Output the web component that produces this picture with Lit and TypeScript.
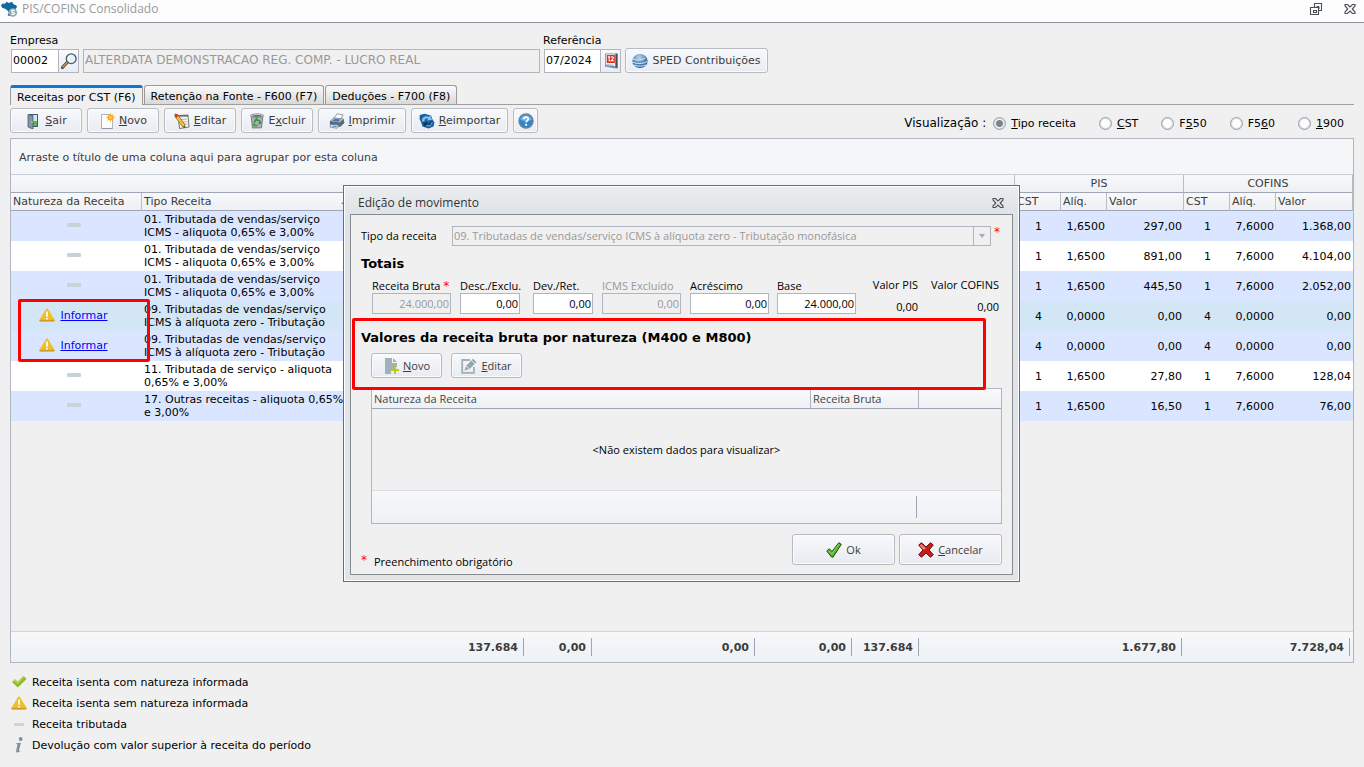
import { LitElement, html, css, svg, nothing } from "lit";
import { customElement, property, state } from "lit/decorators.js";
import { classMap } from "lit/directives/class-map.js";

const icons: Record<string, unknown> = {
  brazil: svg`<path d="M0 4.500 1.500 2.500 4 2.800 5.500.8 8 2l3-1.200 1.500 2.400 3 1.300.5 1.500-1.500 2-1 3-2.500 1.500-1.500 2.500L8 15l-1.500-1L8 12 7 10 5 8.200 3.500 7.500 1.500 7z" fill="#14699c"/><circle cx="11.800" cy="11.500" r="4.300" fill="#8fa9b8"/><path d="M13.600 9.700c-1-.8-3-.6-3 .6s3 .8 3 2-2.200 1.400-3.200.5" fill="none" stroke="#fff" stroke-width="1.300"/>`,
  search: svg`<path d="M1.500 14.500 6.500 9" stroke="#5f4326" stroke-width="3.200" stroke-linecap="round"/><path d="M2 14 6 9.600" stroke="#c49a5a" stroke-width="1.500" stroke-linecap="round"/><circle cx="10.200" cy="5.700" r="4.900" fill="#e6f1fa" stroke="#4a5866" stroke-width="1.300"/><path d="M7.500 5.500a3 3 0 0 1 3-2.600" stroke="#fff" stroke-width="1.400" fill="none"/>`,
  calendar: svg`<path d="M2 .5h12.500v15l-3-.2L2 13.500z" fill="#7c8998"/><path d="M2.800 1.200h9.700v12L2.800 12z" fill="#eef2f6"/><path d="M3.800 2h8v8h-8z" fill="#d6301d"/><path d="M5 4.200 6.200 3.500v5M8 4.600c.3-1.200 2.400-1.100 2.400.2 0 1-1.200 1.800-2.300 3h2.700" stroke="#fff" stroke-width="1.100" fill="none"/><path d="M12.500 1 14.500.500v15l-2-2.300z" fill="#454f5c"/><path d="M3.500 11.500l7 1" stroke="#9fc4e4" stroke-width="1.400"/>`,
  globe: svg`<defs><radialGradient id="g" cx=".45" cy=".25" r=".8"><stop offset="0" stop-color="#b9d4ec"/><stop offset=".6" stop-color="#4a7fb4"/><stop offset="1" stop-color="#234f82"/></radialGradient></defs><ellipse cx="8" cy="8" rx="7.700" ry="7" fill="url(#g)"/><path d="M.5 5.500c4 2.200 8 2.200 12.500-.5M.6 9c4 2 10 2.200 14.700-.4M2 12c4 1.600 9 1.500 12-.2" stroke="#dcebf7" stroke-width="1" fill="none"/>`,
  door: svg`<path d="M4 1h9v13H4z" fill="#4d5a66"/><path d="M7 2h5v11H7z" fill="#cfe8f6"/><path d="M7 8h5v5H7z" fill="#57b947"/><path d="M3 1.500 8 2.500V16l-5-2z" fill="#8197a8" stroke="#3f4d59" stroke-width=".7"/><circle cx="7" cy="9" r=".7" fill="#e8eef2"/>`,
  page: svg`<path d="M2.500 1.500h8l3 3v11h-11z" fill="#fdfdfd" stroke="#a4acb6" stroke-width=".9"/><path d="M3 15.500h10.500" stroke="#8e98a3"/><g stroke="#ffb528" stroke-width="1.300"><path d="M11.500.3v8.400M7.300 4.500h8.400M8.600 1.600l5.800 5.800M14.400 1.600 8.600 7.400"/></g><circle cx="11.500" cy="4.500" r="2.500" fill="#ff9c12"/><circle cx="11.500" cy="4.500" r="1.200" fill="#ffe45c"/>`,
  notepad: svg`<path d="M4 2.500 14 2l1 12-9.500 1.500z" fill="#f8f6ee" stroke="#5e6670" stroke-width=".9"/><path d="M5 2.300v2M7 2.200v2M9 2.100v2M11 2v2M13 2v2" stroke="#3d454e"/><path d="M7 6.500l6-.4M7.500 9l5.700-.4M8 11.500l5.500-.5" stroke="#9aa6b2" stroke-width=".8"/><path d="M1 1l2.700.6L11 12l-.3 2.600-2.400-1.200L1 3.500z" fill="#f6c633" stroke="#7a4d12" stroke-width=".7"/><path d="M1 1l2.700.6.8 1.200L2 5 1 3.500z" fill="#d83a26"/><path d="m10.700 14.600-1.700-.9 1.700-1z" fill="#2b2b2b"/>`,
  bin: svg`<path d="M2 2.500h12l-1.500 12.300-9 .2z" fill="#a8b2ba" stroke="#606a72" stroke-width=".8"/><ellipse cx="8" cy="2.700" rx="6.500" ry="1.800" fill="#e9eef2" stroke="#6b757e" stroke-width=".8"/><ellipse cx="8" cy="2.900" rx="4.800" ry=".9" fill="#5b656e"/><path d="M5 9.500 7.500 6l1.500 2M10 7l1.500 3-2 .8M8.500 12.500H5.300L4.800 10.500" fill="none" stroke="#2f9a2b" stroke-width="1.700"/>`,
  printer: svg`<path d="M5 5 8 .8l6 1L11.500 7z" fill="#fafcfe" stroke="#6f7b86" stroke-width=".7"/><path d="M1 8 5 4.500l9.500 1.300L15.500 10l-4.500 4L.8 11.500z" fill="#5c6b78"/><path d="M1.500 8 5.200 5l8.800 1.200L10.500 9.600z" fill="#b7c4cf"/><path d="M3.300 7.700 6 5.700l5.500.8-2 2.300z" fill="#2e7dc1"/><path d="M2 11.500 9.500 12l-1.500 3.200-7-1.200z" fill="#eef5fb" stroke="#54718c" stroke-width=".7"/><path d="M3.500 13l4 .5" stroke="#3d87c7" stroke-width="1.200"/>`,
  reimport: svg`<path d="M.8 2 5.500.7 12 2.500l1.500 4 2 3-1 4-5 2-6-2L2 9 .5 6z" fill="#1a5f9e"/><path d="M3 8.500C2.500 4.500 6 2 10 3.800L11 2l2 5-5 .4 1-1.600C7 5 5.200 6 5.500 8.500z" fill="#7cc4f2"/><path d="M13.500 8.500c.2 3.500-3.500 5.500-7 3.600L5.500 14 4 9.500l5-.3-1 1.500c2 .8 3.600 0 3.500-2.200z" fill="#0c3764"/><path d="M13 9.500c-.2 2.500-2.700 4-5.300 3" fill="none" stroke="#9ad5f8" stroke-width=".9"/>`,
  help: svg`<circle cx="8" cy="8" r="7.700" fill="#72838f"/><circle cx="8" cy="8" r="6.300" fill="#2f86cf"/><path d="M2.200 7a6 6 0 0 1 11.600 0C10 8.500 6 8.500 2.200 7z" fill="#6db1e6"/><path d="M5.800 6.200C5.800 3.400 10.300 3.500 10.300 6c0 1.700-2.200 1.700-2.200 3.600" fill="none" stroke="#fff" stroke-width="1.700"/><circle cx="8.100" cy="11.800" r="1.100" fill="#fff"/>`,
  warn: svg`<path d="M8 1.600c.6 0 1 .3 1.300.8l6.200 10.300c.6 1-.1 1.800-1.100 1.800H1.600c-1 0-1.700-.8-1.100-1.800L6.700 2.400C7 1.900 7.400 1.600 8 1.600z" fill="#efc02c"/><path d="M.5 12.800h15c.3 1-.3 1.700-1.100 1.700H1.600c-.8 0-1.400-.7-1.100-1.700z" fill="#cf9e28"/><path d="M8 4.500v5.300M8 11v1.600" stroke="#fff" stroke-width="1.700"/>`,
  minus: svg`<rect x="1" y="6" width="14" height="4" rx="1.200" fill="#c8d3d8"/>`,
  dash: svg`<rect x="3" y="7" width="10" height="3" rx=".8" fill="#c8d6da"/>`,
  green: svg`<path d="m1 8 3-2.800 2.800 2.600L12.500 2 15.500 5 6.800 13.500z" fill="#8dbb2b"/><path d="m1 8 3-2.800 2.800 2.600L12.500 2l1 1-6.700 7L3 7.500z" fill="#b2d345"/>`,
  info: svg`<path d="M4.500 6.500c1.800-.3 3.600-.7 5.300-.7L8 13.200c-.2 1.200.6 1 2.100.1-1.300 2.100-5.500 3.600-4.900.3L6.500 7.600z" fill="#7e9095"/><circle cx="9.700" cy="2" r="1.900" fill="#7e9095"/>`,
  fileadd: svg`<path d="M2 0h7v5h5v4h-3v3H8v4H2z" fill="#a0b1b8"/><path d="M10 0l4 4h-4z" fill="#a0b1b8"/><path d="M12 8v8M8 12h8" stroke="#bccb14" stroke-width="2"/>`,
  editbox: svg`<path d="M9 2H1.200v12.800H13V9" fill="none" stroke="#9fb0b7" stroke-width="1.800"/><path d="M3.500 12.500 5 8l7-7.200 3.500 3.400L8.500 11z" fill="#93a6ae"/><path d="M10.500 2.500 14 6M5 8l3.500 3" stroke="#eef2f5" stroke-width=".9"/>`,
  ok: svg`<path d="m.8 9 2.500-2.200L6 9.500 12.800.8l2.500 1.500L7 15.200 5.500 15z" fill="#57b82f" stroke="#1e4a12" stroke-width="1"/><path d="M2.500 8.800 5.800 12 13 2.200" fill="none" stroke="#8fdc5c" stroke-width="1"/>`,
  cancel: svg`<path d="M3.500.8 8 5l4.500-4.200L15.300 3 11 8l4.300 4.700-2.800 2.500L8 11l-4.500 4.200L.7 12.700 5 8 .7 3z" fill="#d01a1a" stroke="#641010" stroke-width="1" stroke-linejoin="round"/><path d="M3.300 2 8 6.300 5.500 8 1.800 3.500z" fill="#ee9d97" opacity=".8"/>`,
  close: svg`<path d="M3 3.500h2.500L8 6l2.500-2.500H13V5L10.200 8 13 11v1.500h-2.500L8 10l-2.500 2.500H3V11l2.800-3L3 5z" fill="none" stroke="#4a4f55" stroke-width="1.100"/>`,
  restore: svg`<path d="M6.500 6.500v-4h7v7h-3M2.500 6.500h8v7h-8zM5.500 9.500h3v2h-3z" fill="none" stroke="#4a4f55" stroke-width="1.100"/><path d="M8.500 5.500h2.500V8" fill="none" stroke="#4a4f55" stroke-width="1"/>`,
};

@customElement("app-icon")
export class AppIcon extends LitElement {
  static styles = css`
    :host { display: inline-flex; flex: none; width: 16px; height: 16px; }
    svg { width: 100%; height: 100%; }
  `;
  @property() name = "";
  render() {
    return html`<svg viewBox="0 0 16 16" aria-hidden="true">${icons[this.name]}</svg>`;
  }
}

interface Row { pending?: boolean; tipo: [string, string]; pis: string[]; cofins: string[]; selected?: boolean }

const rows: Row[] = [
  { tipo: ["01. Tributada de vendas/serviço", "ICMS - aliquota 0,65% e 3,00%"], pis: ["1", "1,6500", "297,00"], cofins: ["1", "7,6000", "1.368,00"] },
  { tipo: ["01. Tributada de vendas/serviço", "ICMS - aliquota 0,65% e 3,00%"], pis: ["1", "1,6500", "891,00"], cofins: ["1", "7,6000", "4.104,00"] },
  { tipo: ["01. Tributada de vendas/serviço", "ICMS - aliquota 0,65% e 3,00%"], pis: ["1", "1,6500", "445,50"], cofins: ["1", "7,6000", "2.052,00"] },
  { pending: true, selected: true, tipo: ["09. Tributadas de vendas/serviço", "ICMS à alíquota zero - Tributação"], pis: ["4", "0,0000", "0,00"], cofins: ["4", "0,0000", "0,00"] },
  { pending: true, tipo: ["09. Tributadas de vendas/serviço", "ICMS à alíquota zero - Tributação"], pis: ["4", "0,0000", "0,00"], cofins: ["4", "0,0000", "0,00"] },
  { tipo: ["11. Tributada de serviço - aliquota", "0,65% e 3,00%"], pis: ["1", "1,6500", "27,80"], cofins: ["1", "7,6000", "128,04"] },
  { tipo: ["17. Outras receitas - aliquota 0,65%", "e 3,00%"], pis: ["1", "1,6500", "16,50"], cofins: ["1", "7,6000", "76,00"] },
];

const views: [string, string, string][] = [
  ["", "T", "ipo receita"], ["", "C", "ST"], ["F", "5", "50"], ["F5", "6", "0"], ["", "1", "900"],
];

const tools: [string, string, string, string, string][] = [
  ["door", "", "S", "air", "std"],
  ["page", "", "N", "ovo", "std"],
  ["notepad", "", "E", "ditar", "std"],
  ["bin", "E", "x", "cluir", "std"],
  ["printer", "", "I", "mprimir", "wide"],
  ["reimport", "", "R", "eimportar", "wider"],
];

const buttonStyles = css`
  .btn {
    display: inline-flex; align-items: center; justify-content: center; gap: 4px;
    box-sizing: border-box; height: 25px; padding: 0; flex: none;
    font: inherit; color: #3c3c3c; white-space: nowrap;
    border: 1px solid #b6bac2; border-radius: 3px;
    background: linear-gradient(#f7f9fc, #e8ebf0);
    box-shadow: inset 0 0 0 1px #fafbfd;
  }
`;

@customElement("movement-dialog")
export class MovementDialog extends LitElement {
  static styles = [buttonStyles, css`
    :host { display: block; font: 11px/16px "Open Sans", "Noto Sans", sans-serif; color: #000; }
    .dialog {
      position: relative; box-sizing: border-box; width: 677px; padding: 0 6px 6px;
      border: 1px solid #6a6e74; box-shadow: inset 0 0 0 1px #fff;
      background: linear-gradient(#ebedf0, #dfe3e6 30px, #e2e5e8);
    }
    .caption { display: flex; align-items: center; height: 28px; padding: 5px 7px 0 8px; box-sizing: border-box; color: #333; }
    .caption h2 { font: inherit; font-size: 12px; margin: 0; flex: 1; }
    .close { display: flex; padding: 0; border: 0; background: none; }
    .frame { border: 1px solid #878c93; background: #f0f0f0; padding: 11px 10px 4px; box-sizing: border-box; display: flex; flex-direction: column; }
    .type { display: flex; align-items: center; }
    .type label { width: 91px; }
    .combo { position: relative; flex: 1; display: flex; }
    select {
      appearance: none; width: 100%; height: 20px; box-sizing: border-box; border: 1px solid #b1b5bf;
      background: none; font: inherit; line-height: 18px; padding: 0 20px 0 1px; color: #999; opacity: 1; border-radius: 0; margin: 0;
    }
    .arrow { position: absolute; right: 0; top: 0; bottom: 0; width: 18px; box-sizing: border-box; border: 1px solid #b1b5bf; display: grid; place-items: center; pointer-events: none; }
    .arrow::after { content: ""; border: solid transparent; border-top-color: #aaa; border-width: 4px 3px 0; }
    .star { color: #f00; font: 12px/12px "DejaVu Sans", sans-serif; }
    .type .star { align-self: flex-start; width: 11px; padding-left: 3px; box-sizing: border-box; }
    h3 { font: bold 13px/18px "DejaVu Sans", sans-serif; margin: 0; }
    .totals-title { margin-top: 9px; }
    .totals { display: grid; grid-template-columns: 88px 73px 69px 88px 87px 79px 62px 1fr; padding: 5px 3px 0 11px; }
    .field { display: flex; flex-direction: column; white-space: nowrap; }
    .field label { line-height: 15px; height: 15px; }
    .field input {
      width: 79px; height: 21px; box-sizing: border-box; border: 1px solid #b1b5bf; background: #fff;
      font: inherit; text-align: right; padding: 0 1px 1px; color: #000; border-radius: 0; margin: 0;
    }
    .field.narrow input { width: 60px; }
    .field.off label { color: #999; }
    .field input:disabled { background: #f0f0f0; color: #999; }
    .result { display: flex; flex-direction: column; align-items: flex-end; gap: 8px; line-height: 14px; white-space: nowrap; }
    .nature-title { margin-top: 15px; }
    .actions { display: flex; gap: 9px; padding: 6px 0 0 10px; }
    .actions .btn { width: 71px; }
    .grid { margin: 10px 0 0 10px; border: 1px solid #b1b5bf; display: flex; flex-direction: column; height: 136px; box-sizing: border-box; flex: none; }
    table { width: 100%; table-layout: fixed; border-collapse: separate; border-spacing: 0; }
    th { height: 19px; padding: 0 2px; text-align: left; font-weight: normal; color: #444; border-right: 1px solid #b1b5bf; border-bottom: 1px solid #9fa5b5; background: linear-gradient(#f9fafb, #edf0f4); }
    th:last-child { border-right: 0; }
    td { height: 81px; padding: 0; text-align: center; }
    .c2 { width: 108px; } .c3 { width: 82px; }
    .sum { flex: 1; border-top: 1px solid #d8dde4; background: linear-gradient(#f6f8fa, #edf1f5); display: flex; padding: 5px 84px; justify-content: flex-end; }
    .sum span { border-right: 1px solid #9fa5b5; }
    .bottom { display: flex; align-items: flex-start; padding-top: 10px; gap: 4px; }
    .note { flex: 1; padding-top: 20px; display: flex; gap: 7px; line-height: 16px; }
    .bottom .btn { width: 103px; height: 31px; }
    .mark { position: absolute; left: 8px; top: 132px; width: 634px; height: 72px; box-sizing: border-box; border: 3px solid #f00; border-radius: 2px; pointer-events: none; }
  `];

  private field(id: string, label: unknown, value: string, opts: { narrow?: boolean; off?: boolean; locked?: boolean } = {}) {
    return html`<div class=${classMap({ field: true, narrow: !!opts.narrow, off: !!opts.off })}>
      <label for=${id}>${label}</label>
      <input id=${id} .value=${value} ?disabled=${!!(opts.off || opts.locked)} />
    </div>`;
  }

  render() {
    return html`
      <section class="dialog" role="dialog" aria-labelledby="dlg-title">
        <header class="caption">
          <h2 id="dlg-title">Edição de movimento</h2>
          <button class="close" aria-label="Fechar"><app-icon name="close"></app-icon></button>
        </header>
        <div class="frame">
          <div class="type">
            <label for="tipo">Tipo da receita</label>
            <div class="combo">
              <select id="tipo" disabled><option>09. Tributadas de vendas/serviço ICMS à alíquota zero - Tributação monofásica</option></select>
              <span class="arrow"></span>
            </div>
            <span class="star">*</span>
          </div>
          <h3 class="totals-title">Totais</h3>
          <div class="totals">
            ${this.field("bruta", html`Receita Bruta <span class="star">*</span>`, "24.000,00", { locked: true })}
            ${this.field("desc", "Desc./Exclu.", "0,00", { narrow: true })}
            ${this.field("dev", "Dev./Ret.", "0,00", { narrow: true })}
            ${this.field("icms", "ICMS Excluído", "0,00", { off: true })}
            ${this.field("acr", "Acréscimo", "0,00")}
            ${this.field("base", "Base", "24.000,00")}
            <div class="result"><span>Valor PIS</span><output>0,00</output></div>
            <div class="result"><span>Valor COFINS</span><output>0,00</output></div>
          </div>
          <h3 class="nature-title">Valores da receita bruta por natureza (M400 e M800)</h3>
          <div class="actions">
            <button class="btn"><app-icon name="fileadd"></app-icon><span><u>N</u>ovo</span></button>
            <button class="btn"><app-icon name="editbox"></app-icon><span><u>E</u>ditar</span></button>
          </div>
          <div class="grid">
            <table>
              <colgroup><col /><col class="c2" /><col class="c3" /></colgroup>
              <thead><tr><th>Natureza da Receita</th><th>Receita Bruta</th><th></th></tr></thead>
              <tbody><tr><td colspan="3">&lt;Não existem dados para visualizar&gt;</td></tr></tbody>
            </table>
            <div class="sum"><span></span></div>
          </div>
          <div class="bottom">
            <div class="note"><span class="star">*</span><span>Preenchimento obrigatório</span></div>
            <button class="btn"><app-icon name="ok"></app-icon><span>Ok</span></button>
            <button class="btn"><app-icon name="cancel"></app-icon><span><u>C</u>ancelar</span></button>
          </div>
        </div>
        <div class="mark"></div>
      </section>`;
  }
}

@customElement("app-root")
export class AppRoot extends LitElement {
  static styles = [buttonStyles, css`
    :host { display: flex; flex-direction: column; position: relative; min-height: 100vh; box-sizing: border-box; background: #f0f0f0; color: #000; font: 11px/13px "DejaVu Sans", sans-serif; overflow: hidden; }
    .titlebar { display: flex; align-items: center; gap: 18px; height: 23px; box-sizing: border-box; padding: 0 6px 4px 1px; border-bottom: 1px solid #8a929c; background: #fdfdfd; }
    .titlebar h1 { flex: 1; margin: 0 0 0 -13px; font: 12px/16px "Open Sans", "Noto Sans", sans-serif; color: #999; }
    .titlebar button { padding: 0; border: 0; background: none; display: flex; }
    .filters { display: flex; align-items: flex-end; gap: 4px; padding: 11px 10px 0 11px; }
    .group { display: flex; flex-direction: column; gap: 1px; }
    .group label { margin-left: -1px; line-height: 14px; }
    .line { display: flex; gap: 4px; }
    .box { display: flex; height: 24px; box-sizing: border-box; border: 1px solid #b1b5bf; background: #fff; }
    .box input { border: 0; margin: 0; padding: 0 1px 2px; width: 46px; box-sizing: border-box; font: inherit; color: #000; background: none; }
    .box.date input { width: 55px; }
    .box button { width: 20px; padding: 0; border: 0; border-left: 1px solid #b1b5bf; background: linear-gradient(#f8f9fb, #e9ecf1); display: grid; place-items: center; }
    .box.name { background: none; }
    .box.name input { width: 455px; color: #999; font-size: 12px; }
    .filters .btn { width: 143px; }
    .tabs { display: flex; gap: 1px; margin: 12px 10px 0; border-bottom: 1px solid #a0a0a0; }
    .tab { height: 19px; box-sizing: border-box; padding: 0 6px; font: inherit; color: #000; border: 1px solid #9a9a9a; border-bottom: 0; border-radius: 3px 3px 0 0; background: linear-gradient(#fafafa, #d9d9d9); line-height: 22px; white-space: nowrap; }
    .tab.active { height: 20px; margin-bottom: -1px; border-top: 3px solid #0a78d7; line-height: 17px; background: #f0f0f0; padding-top: 1px; }
    .toolbar { display: flex; align-items: center; gap: 5px; padding: 3px 20px 0 10px; }
    .std { width: 72px; } .wide { width: 88px; } .wider { width: 97px; } .square { width: 25px; }
    .views { display: flex; align-items: center; gap: 23px; margin-left: auto; padding-top: 6px; }
    .views .cap { font-size: 12px; margin-right: -16px; }
    .views label { display: flex; align-items: center; gap: 5px; white-space: nowrap; }
    .views input { appearance: none; width: 13px; height: 13px; box-sizing: border-box; margin: 0; border: 1px solid #9aa0ab; border-radius: 50%; background: #fdfdfd; box-shadow: inset 0 0 0 1px #d5d8de; }
    .views input:checked { background: radial-gradient(circle, #7d828c 0 3px, #f4f5f6 4px); }
    .panel { display: flex; flex-direction: column; flex: 1; margin: 5px 10px 0; border: 1px solid #b1b5bf; }
    .drag { padding: 12px 8px 10px; line-height: 13px; color: #3c3c3c; background: #f5f6f8; border-bottom: 1px solid #c9cdd6; }
    table { width: 100%; table-layout: fixed; border-collapse: separate; border-spacing: 0; }
    .c-nat { width: 131px; } .c-tipo { width: 212px; } .c-n { width: 46px; } .c-v { width: 77px; }
    th { box-sizing: border-box; height: 18px; padding: 0 2px; font-weight: normal; color: #3c3c3c; text-align: left; line-height: 16px; border-right: 1px solid #b9bdc7; border-bottom: 1px solid #9fa5b5; background: linear-gradient(#f7f8fa, #edf0f4); }
    th.band { text-align: center; }
    .sorted::after { content: ""; float: right; margin-top: 5px; border: solid transparent; border-bottom-color: #7a808c; border-width: 0 5px 5px; }
    td { height: 30px; box-sizing: border-box; padding: 0 2px; line-height: 13px; white-space: nowrap; text-align: right; background: #fff; overflow: hidden; }
    .odd td { background: #dae6ff; }
    .sel td { background: #d3e6f5; }
    td.nat { text-align: center; padding: 0 8px 2px 2px; } td.tipo { text-align: left; } td.cst { padding-right: 19px; }
    .nat app-icon, .nat a { vertical-align: middle; }
    .nat a { color: #00f; margin-left: 5px; }
    .sum { display: flex; margin-top: auto; height: 31px; box-sizing: border-box; padding: 6px 3px; padding-left: 0; border-top: 1px solid #d0d4db; background: linear-gradient(#f6f8fa, #edf1f5); font-weight: bold; color: #3c3c3c; }
    .sum span { box-sizing: border-box; border-right: 1px solid #9fa5b5; text-align: right; padding-right: 5px; line-height: 19px; }
    .s1 { width: 513px; } .s2 { width: 68px; } .s3 { width: 163px; } .s4 { width: 97px; } .s5 { width: 67px; } .s6 { flex: 1; } .s7 { width: 168px; }
    .legend { list-style: none; margin: 0; padding: 11px 11px 14px; display: flex; flex-direction: column; gap: 5px; }
    .legend li { display: flex; align-items: center; gap: 5px; height: 16px; }
    .overlay { position: absolute; inset: 0 1px 0 0; display: grid; place-items: center; }
    .mark { position: absolute; left: 18px; top: 299px; width: 132px; height: 63px; box-sizing: border-box; border: 3px solid #f00; border-radius: 2px; }
  `];

  @state() private view = 0;

  render() {
    return html`
      <header class="titlebar">
        <app-icon name="brazil"></app-icon>
        <h1>PIS/COFINS Consolidado</h1>
        <button aria-label="Restaurar"><app-icon name="restore"></app-icon></button>
        <button aria-label="Fechar janela"><app-icon name="close"></app-icon></button>
      </header>
      <div class="filters">
        <div class="group">
          <label for="empresa">Empresa</label>
          <div class="line">
            <div class="box"><input id="empresa" value="00002" /><button aria-label="Pesquisar"><app-icon name="search"></app-icon></button></div>
            <div class="box name"><input aria-label="Nome da empresa" disabled value="ALTERDATA DEMONSTRACAO REG. COMP. - LUCRO REAL" /></div>
          </div>
        </div>
        <div class="group">
          <label for="ref">Referência</label>
          <div class="box date"><input id="ref" value="07/2024" /><button aria-label="Calendário"><app-icon name="calendar"></app-icon></button></div>
        </div>
        <button class="btn"><app-icon name="globe"></app-icon>SPED Contribuições</button>
      </div>
      <nav class="tabs">
        <button class="tab active">Receitas por CST (F6)</button>
        <button class="tab">Retenção na Fonte - F600 (F7)</button>
        <button class="tab">Deduções - F700 (F8)</button>
      </nav>
      <div class="toolbar">
        ${tools.map(([icon, a, k, b, size]) => html`<button class="btn ${size}"><app-icon name=${icon}></app-icon><span>${a}<u>${k}</u>${b}</span></button>`)}
        <button class="btn square" aria-label="Ajuda"><app-icon name="help"></app-icon></button>
        <div class="views" role="radiogroup" aria-label="Visualização">
          <span class="cap">Visualização :</span>
          ${views.map(([a, k, b], i) => html`<label><input type="radio" name="view" .checked=${this.view === i} @change=${() => (this.view = i)} /><span>${a}<u>${k}</u>${b}</span></label>`)}
        </div>
      </div>
      <main class="panel">
        <div class="drag">Arraste o título de uma coluna aqui para agrupar por esta coluna</div>
        <table>
          <colgroup>
            <col class="c-nat" /><col class="c-tipo" /><col />
            <col class="c-n" /><col class="c-n" /><col class="c-v" />
            <col class="c-n" /><col class="c-n" /><col class="c-v" />
          </colgroup>
          <thead>
            <tr><th colspan="3"></th><th class="band" colspan="3">PIS</th><th class="band" colspan="3">COFINS</th></tr>
            <tr><th>Natureza da Receita</th><th class="sorted">Tipo Receita</th><th></th><th>CST</th><th>Alíq.</th><th>Valor</th><th>CST</th><th>Alíq.</th><th>Valor</th></tr>
          </thead>
          <tbody>
            ${rows.map((r, i) => html`<tr class=${classMap({ odd: i % 2 === 0 || !!r.pending, sel: !!r.selected })}>
              <td class="nat">${r.pending
                ? html`<app-icon name="warn"></app-icon><a href="#informar">Informar</a>`
                : html`<app-icon name="minus"></app-icon>`}</td>
              <td class="tipo">${r.tipo[0]}<br />${r.tipo[1]}</td>
              <td>${nothing}</td>
              ${[r.pis, r.cofins].map((g) => html`<td class="cst">${g[0]}</td><td>${g[1]}</td><td>${g[2]}</td>`)}
            </tr>`)}
          </tbody>
        </table>
        <div class="sum">
          <span class="s1">137.684</span><span class="s2">0,00</span><span class="s3">0,00</span><span class="s4">0,00</span><span class="s5">137.684</span><span class="s6">1.677,80</span><span class="s7">7.728,04</span>
        </div>
      </main>
      <ul class="legend">
        <li><app-icon name="green"></app-icon>Receita isenta com natureza informada</li>
        <li><app-icon name="warn"></app-icon>Receita isenta sem natureza informada</li>
        <li><app-icon name="dash"></app-icon>Receita tributada</li>
        <li><app-icon name="info"></app-icon>Devolução com valor superior à receita do período</li>
      </ul>
      <div class="mark"></div>
      <div class="overlay"><movement-dialog></movement-dialog></div>`;
  }
}
